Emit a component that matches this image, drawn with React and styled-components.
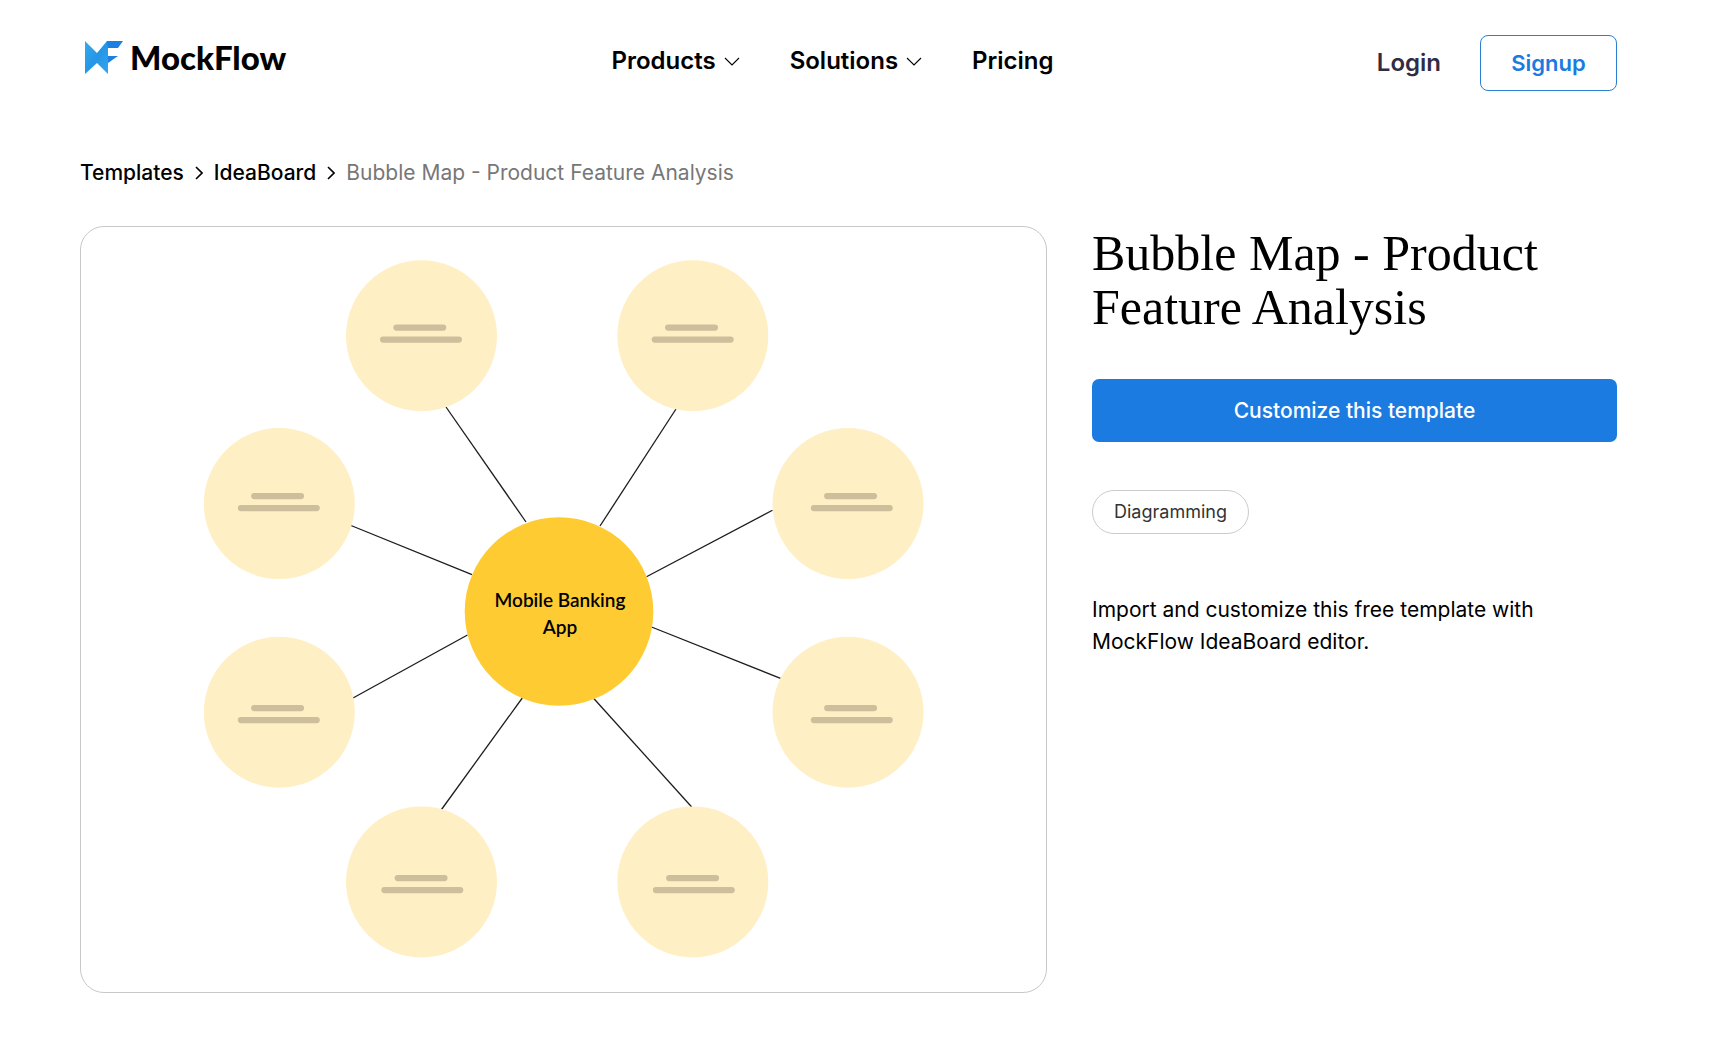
import React from "react";
import styled, { createGlobalStyle } from "styled-components";

const GlobalStyle = createGlobalStyle`
  *, *::before, *::after { box-sizing: border-box; }
  body {
    margin: 0;
    background: #fff;
    color: #000;
    font-family: Inter, "Liberation Sans", sans-serif;
  }
  a { color: inherit; text-decoration: none; }
`;

const Page = styled.div`
  padding: 0 112px 62px 80px;
`;

const Header = styled.header`
  display: grid;
  grid-template-columns: 1fr auto 1fr;
  align-items: center;
  padding-top: 35px;
`;

const Logo = styled.a`
  display: flex;
  align-items: center;
  gap: 6px;
  height: 44px;
  padding-left: 5px;
  align-self: start;
  justify-self: start;
`;

const LogoName = styled.span`
  font: 900 33px/40px Lato, sans-serif;
`;

const Nav = styled.nav`
  display: flex;
  align-items: center;
  gap: 50px;
  padding: 0 32px 4px 0;
`;

const NavButton = styled.button`
  display: flex;
  align-items: center;
  gap: 8px;
  padding: 0;
  border: 0;
  background: none;
  color: #000;
  font: 600 24px/32px Inter, sans-serif;
  cursor: pointer;
`;

const NavLink = styled.a`
  font: 600 24px/32px Inter, sans-serif;
`;

const Account = styled.div`
  display: flex;
  align-items: center;
  justify-content: flex-end;
  gap: 39px;
`;

const Login = styled.a`
  color: #302c44;
  font: 600 24px/32px Inter, sans-serif;
`;

const Signup = styled.a`
  display: grid;
  place-items: center;
  width: 137px;
  height: 56px;
  border: 1px solid #2a7fd0;
  border-radius: 8px;
  color: #1b7be1;
  font: 600 22px/32px Inter, sans-serif;
`;

const Breadcrumb = styled.nav`
  display: flex;
  align-items: center;
  gap: 11px;
  margin-top: 66px;
  font-size: 21px;
  line-height: 32px;
`;

const Crumb = styled.a`
  font-weight: 500;
`;

const CurrentCrumb = styled.span`
  color: #777;
`;

const Main = styled.main`
  display: grid;
  grid-template-columns: 967fr 525fr;
  align-items: start;
  gap: 45px;
  margin-top: 37px;
`;

const Preview = styled.figure`
  margin: 0;
  border: 1px solid #c8c8c8;
  border-radius: 24px;
  overflow: hidden;

  svg { display: block; width: 100%; height: auto; }
`;

const CenterLabel = styled.text`
  font: 600 19px Lato, sans-serif;
  text-anchor: middle;
`;

const Details = styled.section`
  display: flex;
  flex-direction: column;
  align-items: flex-start;
`;

const Title = styled.h1`
  margin: 0;
  font: 400 50px/54px "Liberation Serif", serif;
`;

const Customize = styled.button`
  width: 100%;
  height: 63px;
  margin-top: 45px;
  border: 0;
  border-radius: 7px;
  background: #1b7be1;
  color: #fff;
  font: 500 21px/32px Inter, sans-serif;
  cursor: pointer;
`;

const Tag = styled.a`
  margin-top: 48px;
  padding: 9px 21px;
  border: 1px solid #ccc;
  border-radius: 22px;
  color: #333;
  font-size: 18px;
  line-height: 24px;
`;

const Description = styled.p`
  margin: 60px 0 0;
  font-size: 21px;
  line-height: 32px;
`;

const bubbles = [
  { x: 421.5, y: 335.8, barX: 380, barY: 324.5 },
  { x: 692.8, y: 335.8, barX: 651.7, barY: 324.5 },
  { x: 279.3, y: 503.6, barX: 237.8, barY: 493 },
  { x: 848, y: 503.6, barX: 810.8, barY: 493 },
  { x: 279.3, y: 712.2, barX: 237.8, barY: 705 },
  { x: 848, y: 712.2, barX: 810.8, barY: 705 },
  { x: 421.5, y: 881.9, barX: 381.3, barY: 875 },
  { x: 692.8, y: 881.9, barX: 652.8, barY: 875 },
];

const links = [
  [446, 407, 526, 522],
  [676, 409, 600, 526],
  [351, 525.5, 472, 574.7],
  [772.5, 510.3, 646.5, 576.8],
  [353, 698, 467.5, 635],
  [780.5, 678.3, 651.5, 627],
  [441.5, 809.5, 522.3, 698],
  [691.7, 807, 594, 698.7],
];

function BubbleMap() {
  return (
    <svg viewBox="81 227 965 765" role="img" aria-label="Bubble map">
      {links.map(([x1, y1, x2, y2]) => (
        <line key={`${x1}-${y1}`} x1={x1} y1={y1} x2={x2} y2={y2} stroke="#1c1c1c" strokeWidth="1.3" />
      ))}
      {bubbles.map((b) => (
        <g key={`${b.x}-${b.y}`}>
          <circle cx={b.x} cy={b.y} r="75.5" fill="#ffefc5" />
          <rect x={b.barX + 13.3} y={b.barY} width="53" height="6.2" rx="3.1" fill="#cdbf9b" />
          <rect x={b.barX} y={b.barY + 12} width="82" height="6.2" rx="3.1" fill="#cdbf9b" />
        </g>
      ))}
      <circle cx="559" cy="611.5" r="94.3" fill="#ffcb32" />
      <CenterLabel x="560" y="607">Mobile Banking</CenterLabel>
      <CenterLabel x="560" y="634">App</CenterLabel>
    </svg>
  );
}

function LogoMark() {
  return (
    <svg width="39" height="33" viewBox="0 0 39 33" aria-hidden="true">
      <defs>
        <linearGradient id="wing" x1="0" y1="0" x2="1" y2="1">
          <stop offset="0" stopColor="#37abee" />
          <stop offset="0.5" stopColor="#2496e6" />
          <stop offset="1" stopColor="#35a5ed" />
        </linearGradient>
      </defs>
      <path d="M0 0 L12 12 L22 0 H23 V33 L12 22 L0 33 Z" fill="url(#wing)" />
      <path d="M22 0 H38 L33 7 H23 Z" fill="#1d7fe0" />
      <path d="M23 15 H33 L23 22 Z" fill="#1d7fe0" />
    </svg>
  );
}

function ChevronDown() {
  return (
    <svg width="16" height="10" viewBox="0 0 16 10" fill="none" stroke="#000" strokeWidth="1.1" aria-hidden="true">
      <path d="M1 2 L8 9 L15 2" />
    </svg>
  );
}

function ChevronRight() {
  return (
    <svg width="8" height="14" viewBox="0 0 8 14" fill="none" stroke="#000" strokeWidth="1.6" aria-hidden="true">
      <path d="M1 1 L7 7 L1 13" />
    </svg>
  );
}

export default function App() {
  return (
    <>
      <GlobalStyle />
      <Page>
        <Header>
          <Logo href="#">
            <LogoMark />
            <LogoName>MockFlow</LogoName>
          </Logo>
          <Nav>
            <NavButton type="button">Products <ChevronDown /></NavButton>
            <NavButton type="button">Solutions <ChevronDown /></NavButton>
            <NavLink href="#">Pricing</NavLink>
          </Nav>
          <Account>
            <Login href="#">Login</Login>
            <Signup href="#">Signup</Signup>
          </Account>
        </Header>
        <Breadcrumb aria-label="Breadcrumb">
          <Crumb href="#">Templates</Crumb>
          <ChevronRight />
          <Crumb href="#">IdeaBoard</Crumb>
          <ChevronRight />
          <CurrentCrumb aria-current="page">Bubble Map - Product Feature Analysis</CurrentCrumb>
        </Breadcrumb>
        <Main>
          <Preview>
            <BubbleMap />
          </Preview>
          <Details>
            <Title>Bubble Map - Product Feature Analysis</Title>
            <Customize type="button">Customize this template</Customize>
            <Tag href="#">Diagramming</Tag>
            <Description>
              Import and customize this free template with MockFlow IdeaBoard editor.
            </Description>
          </Details>
        </Main>
      </Page>
    </>
  );
}
